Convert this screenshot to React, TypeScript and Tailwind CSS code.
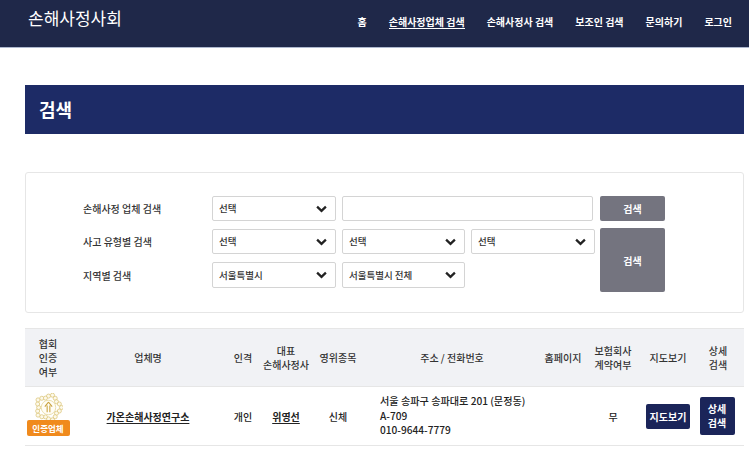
const FONT = "font-['Noto_Sans_CJK_KR','Noto_Sans',sans-serif]";

const NAV = ["홈", "손해사정업체 검색", "손해사정사 검색", "보조인 검색", "문의하기", "로그인"];

function Chevron() {
  return (
    <svg viewBox="0 0 12 8" className="w-[11px] h-[8px] text-[#222]" fill="none" stroke="currentColor" strokeWidth={2.5}>
      <path d="M1.2 1.4 6 6 10.8 1.4" />
    </svg>
  );
}

function Select({ value, className = "" }: { value: string; className?: string }) {
  return (
    <div
      className={`flex items-center justify-between pl-[6px] pr-[8px] bg-white border border-[#d4d4d4] rounded-[2px] text-[9.5px] text-[#333] ${className}`}
    >
      <span>{value}</span>
      <Chevron />
    </div>
  );
}

function Emblem() {
  const dots = [];
  for (let i = 0; i < 20; i++) {
    const a = (i / 20) * Math.PI * 2 - Math.PI / 2;
    const r = 11.8 + 1.6 * Math.cos(a * 5);
    dots.push(<circle key={i} cx={15 + r * Math.cos(a)} cy={15 + r * Math.sin(a)} r={2.1} />);
  }
  return (
    <svg viewBox="0 0 30 30" className="w-[29px] h-[29px]" fill="#fdf9ea" stroke="#dcc67c" strokeWidth={0.8}>
      {dots}
      <circle cx={15} cy={15} r={7.5} fill="#fffdf6" stroke="#e5d597" />
      <path d="M15 9.5 11.2 14M15 9.5 18.8 14M13.6 13v7M16.4 13v7" fill="none" stroke="#c9a23e" strokeWidth={1.1} />
    </svg>
  );
}

export default function App() {
  return (
    <div className={`${FONT} w-[749px] h-[449px] overflow-hidden bg-white text-[#222]`}>
      {/* Header */}
      <header className="h-[48px] bg-[#1f2849] border-b border-[#aeb8cf] flex justify-between pl-[28px] pr-[17px] text-white">
        <div className="text-[17px] leading-[24px] pt-[6px]">손해사정사회</div>
        <nav className="flex gap-[22px] pt-[15px] text-[10px] leading-[14px] font-bold">
          {NAV.map((item, i) => (
            <span key={item} className={i === 1 ? "h-[14px] border-b border-white" : ""}>
              {item}
            </span>
          ))}
        </nav>
      </header>

      <main className="ml-[25px] mr-[5px]">
        {/* Title */}
        <div className="mt-[37px] h-[49px] bg-[#1d2b66] flex items-center pl-[14px] text-white text-[18px] font-bold">
          검색
        </div>

        {/* Search */}
        <div className="mt-[38px] h-[141px] border border-[#e6e6e6] rounded-[3px] pt-[23px] pl-[57px]">
          <div className="grid grid-cols-[123px_124px_123px_124px_65px] grid-rows-[25px_25px_26px] gap-x-[6px] gap-y-[8px] w-fit text-[10px] font-medium text-[#333]">
            <div className="flex items-center">손해사정 업체 검색</div>
            <Select value="선택" />
            <div className="col-span-2 mr-[2px] bg-white border border-[#d4d4d4] rounded-[2px]" />
            <button className="-ml-[1px] w-[65px] bg-[#74747f] rounded-[2px] text-white text-[10px] font-bold">검색</button>

            <div className="flex items-center">사고 유형별 검색</div>
            <Select value="선택" />
            <Select value="선택" />
            <Select value="선택" />
            <button className="row-span-2 self-start h-[64px] -mt-[1px] -ml-[1px] w-[65px] bg-[#74747f] rounded-[2px] text-white text-[10px] font-bold">검색</button>

            <div className="flex items-center">지역별 검색</div>
            <Select value="서울특별시" />
            <Select value="서울특별시 전체" />
          </div>
        </div>

        {/* Result table */}
        <table className="mt-[15px] w-[719px] table-fixed border-collapse text-[10px] text-center">
          <colgroup>
            <col className="w-[46px]" />
            <col className="w-[154px]" />
            <col className="w-[36px]" />
            <col className="w-[50px]" />
            <col className="w-[54px]" />
            <col className="w-[174px]" />
            <col className="w-[48px]" />
            <col className="w-[52px]" />
            <col className="w-[58px]" />
            <col className="w-[47px]" />
          </colgroup>
          <thead>
            <tr className="h-[58px] bg-[#f1f2f5] border-t border-b border-[#e6e6e6] text-[#333] leading-[14px]">
              <th className="font-medium">협회<br />인증<br />여부</th>
              <th className="font-medium">업체명</th>
              <th className="font-medium">인격</th>
              <th className="font-medium">대표<br />손해사정사</th>
              <th className="font-medium">영위종목</th>
              <th className="font-medium">주소 / 전화번호</th>
              <th className="font-medium">홈페이지</th>
              <th className="font-medium">보험회사<br />계약여부</th>
              <th className="font-medium">지도보기</th>
              <th className="font-medium pr-[5px]">상세<br />검색</th>
            </tr>
          </thead>
          <tbody>
            <tr className="h-[59px] border-b border-[#e6e6e6] font-medium">
              <td>
                <div className="flex flex-col items-center -mt-[3px]">
                  <Emblem />
                  <span className="-mt-[2px] w-[43px] h-[16px] leading-[16px] rounded-[2px] bg-[#f08a1d] text-white text-[8.5px] font-bold">인증업체</span>
                </div>
              </td>
              <td className="font-bold underline underline-offset-2">가온손해사정연구소</td>
              <td>개인</td>
              <td className="font-bold underline underline-offset-2">위영선</td>
              <td>신체</td>
              <td className="text-left pl-[15px] leading-[14.5px] text-[10.15px]">
                서울 송파구 송파대로 201 (문정동)<br />A-709<br />010-9644-7779
              </td>
              <td></td>
              <td>무</td>
              <td>
                <button className="w-[44px] h-[25px] bg-[#1b2559] rounded-[2px] text-white text-[10px] font-bold">지도보기</button>
              </td>
              <td className="pr-[7px]">
                <button className="w-[35px] h-[38px] bg-[#1b2559] rounded-[2px] text-white text-[10px] leading-[14px] font-bold">상세<br />검색</button>
              </td>
            </tr>
          </tbody>
        </table>
      </main>
    </div>
  );
}
